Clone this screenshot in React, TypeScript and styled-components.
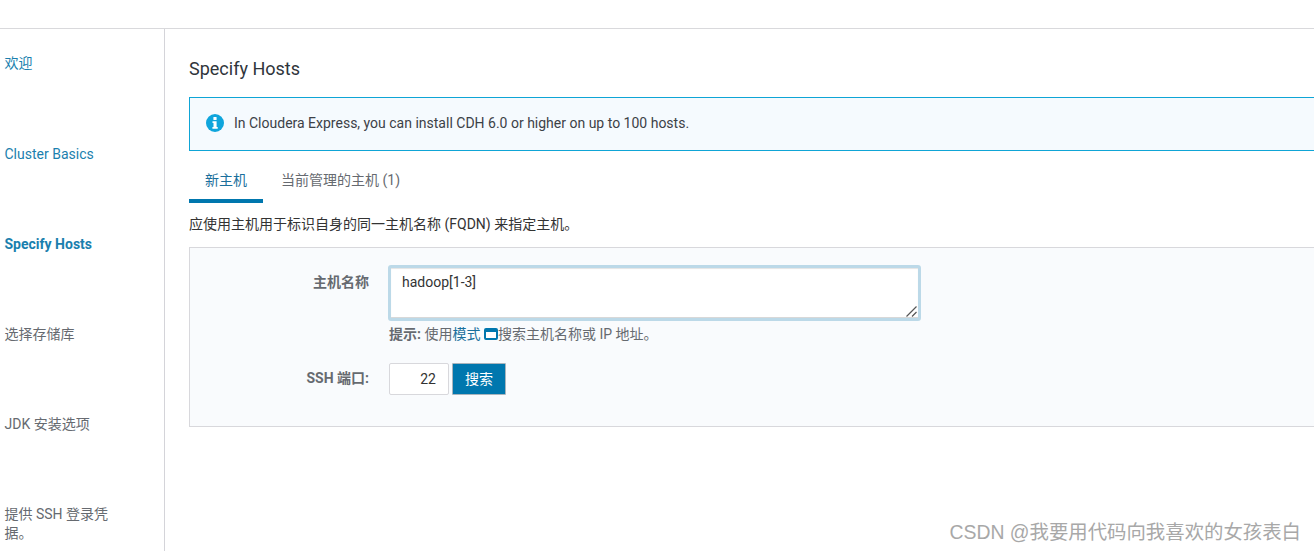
import React from 'react'
import styled, { createGlobalStyle } from 'styled-components'

const GlobalStyle = createGlobalStyle`
  html, body {
    margin: 0;
    height: 100%;
    background: #fff;
    overflow: hidden;
  }
  body {
    font-family: Roboto, "Noto Sans CJK SC", sans-serif;
    font-size: 14px;
    color: #333;
  }
`

const Page = styled.div`
  position: relative;
  width: 1314px;
  height: 551px;
  overflow: hidden;
`

const TopBar = styled.div`
  height: 28px;
  border-bottom: 1px solid #d9d9dc;
`

const Body = styled.div`
  display: flex;
  height: 522px;
`

const Sidebar = styled.nav`
  flex: none;
  width: 111px;
  border-right: 1px solid #d4d4d9;
  padding: 25px 48.5px 0 4.5px;
  box-sizing: content-box;
`

const StepItem = styled.div<{ $state?: 'link' | 'active' }>`
  height: 90px;
  line-height: 19px;
  font-weight: ${p => (p.$state === 'active' ? 700 : 400)};
  color: ${p => (p.$state ? '#1a7fae' : '#666a70')};
  &:first-child {
    height: 91px;
  }
`

const Main = styled.main`
  flex: 1;
  min-width: 0;
  margin-right: -2px;
  padding: 29px 0 0 24px;
`

const Title = styled.h1`
  margin: 0 0 17px;
  font-size: 18px;
  font-weight: 400;
  line-height: 22px;
  color: #2f353b;
`

const Notice = styled.div`
  display: flex;
  align-items: center;
  gap: 10px;
  height: 54px;
  box-sizing: border-box;
  padding: 0 0 2px 16px;
  background: #f5fafe;
  border: 1px solid #0fa5d6;
  color: #3c4147;
`

const Tabs = styled.div`
  display: flex;
  margin-top: 14px;
`

const Tab = styled.div<{ $active?: boolean }>`
  height: 38px;
  box-sizing: border-box;
  padding: 5px 16px 0;
  line-height: 20px;
  border-bottom: 4px solid ${p => (p.$active ? '#0077ae' : 'transparent')};
  color: ${p => (p.$active ? '#1a6f9c' : '#666a70')};
  & + & {
    margin-left: 2px;
  }
`

const Description = styled.p`
  margin: 11px 0 13px;
  line-height: 20px;
  color: #333;
`

const Panel = styled.div`
  height: 180px;
  box-sizing: border-box;
  padding-top: 17px;
  background: #f9fbfd;
  border: 1px solid #d8d8dc;
`

const FormRow = styled.div`
  display: flex;
`

const FieldLabel = styled.label`
  flex: none;
  width: 179px;
  margin-right: 20px;
  text-align: right;
  font-weight: 700;
  line-height: 20px;
  color: #666a70;
`

const HostLabel = styled(FieldLabel)`
  padding-top: 7px;
`

const PortLabel = styled(FieldLabel)`
  padding-bottom: 2px;
`

const AreaWrap = styled.div`
  position: relative;
  width: 533px;
  height: 56px;
  margin-left: -1px;
`

const HostArea = styled.textarea`
  display: block;
  width: 100%;
  height: 100%;
  box-sizing: border-box;
  padding: 5px 11px;
  border: 3px solid #bcd9e8;
  border-radius: 3px;
  outline: none;
  resize: none;
  background: #fff;
  box-shadow: inset 0 1px 1px #e4e4e4, inset 0 -1px 0 #d8d8d8;
  font: 14px/18px Roboto, "Noto Sans CJK SC", sans-serif;
  color: #333;
`

const ResizeGrip = styled.svg`
  position: absolute;
  right: 4px;
  bottom: 4px;
  width: 11px;
  height: 11px;
`

const Hint = styled.div`
  margin-top: 3px;
  line-height: 20px;
  color: #666a70;
`

const HintLabel = styled.strong`
  font-weight: 700;
`

const HintLink = styled.span`
  color: #1a6f9c;
`

const ExternalIcon = styled.svg`
  width: 14px;
  height: 12px;
  vertical-align: -1px;
`

const PortRow = styled(FormRow)`
  margin-top: 19px;
  align-items: center;
`

const PortInput = styled.input`
  width: 60px;
  height: 32px;
  box-sizing: border-box;
  padding: 0 12px;
  border: 1px solid #d8d8dc;
  border-radius: 2px;
  outline: none;
  background: #fff;
  text-align: right;
  font: 14px Roboto, sans-serif;
  color: #333;
`

const SearchButton = styled.button`
  width: 54px;
  height: 32px;
  margin-left: 3px;
  padding: 0 0 2px;
  background: #0077ae;
  border: 1px solid #a9b4bc;
  border-radius: 1px;
  color: #fff;
  font: 14px Roboto, "Noto Sans CJK SC", sans-serif;
`

const Watermark = styled.div`
  position: absolute;
  right: 13px;
  bottom: 7px;
  font-family: "Liberation Sans", "Noto Sans CJK SC", sans-serif;
  font-size: 19.4px;
  line-height: 24px;
  color: #a8a8a8;
`

const InfoIcon = () => (
  <svg width="18" height="18" viewBox="0 0 18 18" style={{ flex: 'none' }}>
    <circle cx="9" cy="9" r="9" fill="#0fa5dc" />
    <rect x="7.4" y="3" width="3.2" height="3" rx="0.6" fill="#fff" />
    <path d="M6.5 7.3h4.1v5.8h1.1v1.7H6.4v-1.7h1.1V9H6.5z" fill="#fff" />
  </svg>
)

const steps: { label: string; state?: 'link' | 'active' }[] = [
  { label: '欢迎', state: 'link' },
  { label: 'Cluster Basics', state: 'link' },
  { label: 'Specify Hosts', state: 'active' },
  { label: '选择存储库' },
  { label: 'JDK 安装选项' },
  { label: '提供 SSH 登录凭据。' },
]

const App: React.FC = () => (
  <Page>
    <GlobalStyle />
    <TopBar />
    <Body>
      <Sidebar>
        {steps.map(s => (
          <StepItem key={s.label} $state={s.state}>
            {s.label}
          </StepItem>
        ))}
      </Sidebar>
      <Main>
        <Title>Specify Hosts</Title>
        <Notice>
          <InfoIcon />
          In Cloudera Express, you can install CDH 6.0 or higher on up to 100 hosts.
        </Notice>
        <Tabs>
          <Tab $active>新主机</Tab>
          <Tab>当前管理的主机 (1)</Tab>
        </Tabs>
        <Description>应使用主机用于标识自身的同一主机名称 (FQDN) 来指定主机。</Description>
        <Panel>
          <FormRow>
            <HostLabel>主机名称</HostLabel>
            <div>
              <AreaWrap>
                <HostArea defaultValue="hadoop[1-3]" />
                <ResizeGrip viewBox="0 0 11 11">
                  <path d="M0.5 10.5L10.5 0.5M6 10.5L10.5 6" stroke="#555" strokeWidth="1.2" fill="none" />
                </ResizeGrip>
              </AreaWrap>
              <Hint>
                <HintLabel>提示:</HintLabel> 使用<HintLink>模式 </HintLink>
                <ExternalIcon viewBox="0 0 14 12">
                  <rect x="1" y="1" width="12" height="10" rx="1" fill="#fff" stroke="#0077ae" strokeWidth="2" />
                  <rect x="1" y="1" width="12" height="3" fill="#0077ae" />
                </ExternalIcon>
                搜索主机名称或 IP 地址。
              </Hint>
            </div>
          </FormRow>
          <PortRow>
            <PortLabel>SSH 端口:</PortLabel>
            <PortInput defaultValue="22" />
            <SearchButton>搜索</SearchButton>
          </PortRow>
        </Panel>
      </Main>
    </Body>
    <Watermark>CSDN @我要用代码向我喜欢的女孩表白</Watermark>
  </Page>
)

export default App
